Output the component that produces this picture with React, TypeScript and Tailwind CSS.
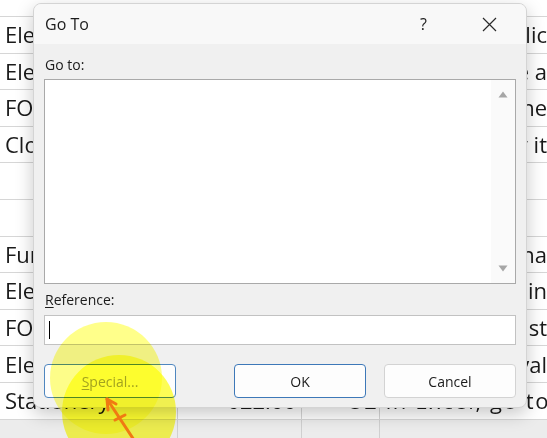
import React from "react";

type Row = { a: string; b?: string; c?: string; d?: string };

const rows: Row[] = [
  { a: "Electronics", d: "Used for a new applic" },
  { a: "Electrical", d: "Shown in the a" },
  { a: "FOOD", d: "Group of the line" },
  { a: "Clothing", d: "Sorted by it" },
  { a: "" },
  { a: "" },
  { a: "Furniture", d: "Additiona" },
  { a: "Electronics", d: "Shows a blin" },
  { a: "FOOD", d: "Order list" },
  { a: "Electrical", d: "Approval" },
  { a: "Stationery", b: "022.00", c: "52 in Excel, go to" },
];

const SheetRow = ({ row }: { row: Row }) => (
  <div className="grid h-[36.6px] grid-cols-[178px_124px_78px_1fr] border-b border-[#d6d6d6]">
    <div className="flex items-center overflow-hidden whitespace-nowrap border-r border-[#d6d6d6] pl-[5px]">
      {row.a}
    </div>
    <div className="flex items-center justify-end overflow-hidden whitespace-nowrap border-r border-[#d6d6d6] pr-[5px]">
      {row.b}
    </div>
    <div className="relative flex items-center border-r border-[#d6d6d6]">
      {row.c && (
        <span className="absolute left-[48px] whitespace-nowrap tracking-[1.6px]">{row.c}</span>
      )}
    </div>
    <div className="flex items-center justify-end overflow-hidden whitespace-nowrap">
      {row.d}
    </div>
  </div>
);

const ScrollArrow = ({ up }: { up?: boolean }) => (
  <svg width="10" height="7" viewBox="0 0 10 7">
    <path d={up ? "M5 0.5 L9.5 6.5 L0.5 6.5 Z" : "M0.5 0.5 L9.5 0.5 L5 6.5 Z"} fill="#a6a6a6" />
  </svg>
);

const Button = ({
  children,
  className,
}: {
  children: React.ReactNode;
  className?: string;
}) => (
  <button
    type="button"
    className={`flex h-[34px] w-[132px] items-center justify-center rounded-[4px] bg-[#fdfdfd] text-[14px] ${className}`}
  >
    {children}
  </button>
);

export default function App() {
  return (
    <div className="relative h-[438px] w-[547px] overflow-hidden bg-white font-['Open_Sans',sans-serif] text-[22px] text-[#1a1a1a]">
      {/* spreadsheet behind */}
      <div className="flex flex-col">
        <div className="h-[17px] border-b border-[#d6d6d6]" />
        {rows.map((row, i) => (
          <SheetRow key={i} row={row} />
        ))}
        <div className="grid h-[20px] grid-cols-[178px_124px_78px_1fr] bg-[#ececec]">
          <div className="border-r border-[#d0d0d0]" />
          <div className="border-r border-[#d0d0d0]" />
          <div className="border-r border-[#d0d0d0]" />
          <div />
        </div>
      </div>

      {/* Go To dialog */}
      <div className="absolute left-[33px] top-[3px] flex h-[405px] w-[494px] flex-col overflow-hidden rounded-[8px] border border-[#d4d4d4] bg-[#f0f0f0] text-[#1b1b1b] shadow-[0_6px_18px_rgba(0,0,0,0.22)]">
        <div className="flex h-[40px] shrink-0 items-center bg-[#f8f8f8] pl-[11px]">
          <span className="text-[16px]">Go To</span>
          <span className="ml-auto mr-[55px] text-[16px]">?</span>
          <svg width="15" height="15" viewBox="0 0 15 15" className="mr-[29px]">
            <path d="M1 1 L14 14 M14 1 L1 14" stroke="#2a2a2a" strokeWidth="1.2" />
          </svg>
        </div>

        <div className="flex flex-1 flex-col px-[10px] pt-[11px]">
          <div className="h-[20px] pl-[1px] text-[14px] leading-[20px]">Go to:</div>
          <div className="mt-[4px] flex h-[205px] border border-[#a9a9a9] bg-white">
            <div className="flex-1" />
            <div className="flex w-[24px] flex-col items-center justify-between bg-[#fafafa] py-[11px]">
              <ScrollArrow up />
              <ScrollArrow />
            </div>
          </div>

          <div className="mt-[6px] h-[20px] pl-[1px] text-[14px] leading-[20px]">
            <span className="underline underline-offset-2">R</span>eference:
          </div>
          <div className="mt-[5px] flex h-[30px] items-center border border-[#c2c2c2] bg-white pl-[4px]">
            <div className="h-[18px] w-[1px] bg-black" />
          </div>

          <div className="mt-[19px] flex items-center">
            <Button className="border border-[#4f86bf] text-[#a3a3a3]">
              <span className="underline underline-offset-2">S</span>pecial...
            </Button>
            <Button className="ml-auto border-[1.5px] border-[#3d78b8]">OK</Button>
            <Button className="ml-[18px] border border-[#d3d3d3]">Cancel</Button>
          </div>
        </div>
      </div>

      {/* highlighter and arrow from the recording */}
      <svg className="pointer-events-none absolute left-0 top-0" width="547" height="438">
        <circle cx="106" cy="378" r="56" fill="#ffff8a" style={{ mixBlendMode: "multiply" }} />
        <circle cx="119" cy="412" r="57" fill="#ffff55" style={{ mixBlendMode: "multiply" }} />
        <g stroke="#f07a12" strokeWidth="3" strokeLinecap="round" fill="none">
          <path d="M107 399 L134 440" />
          <path d="M107 399 L108 410 M107 399 L116 404" />
          <path d="M115 420 L125 415" />
        </g>
      </svg>
    </div>
  );
}
